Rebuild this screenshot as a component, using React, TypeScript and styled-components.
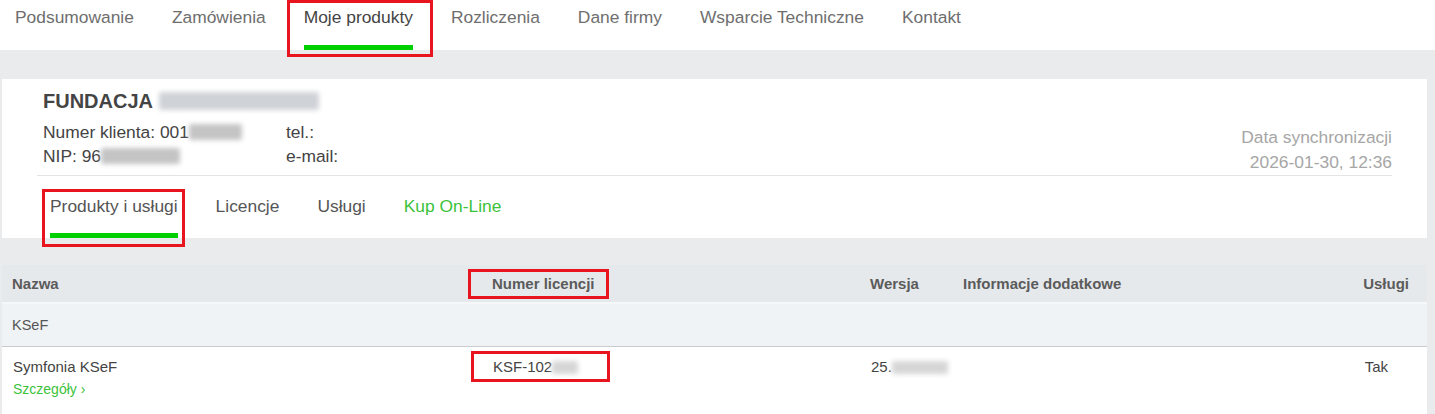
import React from "react";
import styled, { createGlobalStyle } from "styled-components";

const GlobalStyle = createGlobalStyle`
  html, body { margin: 0; padding: 0; background: #ffffff; }
  body { font-family: "Liberation Sans", Arial, sans-serif; color: #444; }
  * { box-sizing: border-box; }
`;

const Page = styled.div`
  width: 1435px;
  height: 414px;
  overflow: hidden;
  background: #ffffff;
`;

const Nav = styled.nav`
  display: flex;
  gap: 38px;
  height: 50px;
  padding: 0 15px;
  background: #ffffff;
  position: relative;
  z-index: 2;
`;

const NavItem = styled.div<{ $active?: boolean }>`
  position: relative;
  display: flex;
  flex-direction: column;
  padding-top: 5px;
  font-size: 17.4px;
  line-height: 24px;
  color: ${(p) => (p.$active ? "#444" : "#6e6e6e")};
  white-space: nowrap;
`;

const Bar = styled.div<{ $gap: number }>`
  margin-top: ${(p) => p.$gap}px;
  height: 5px;
  background: #00d000;
`;

const Highlight = styled.div<{ $l: number; $t: number; $w: number; $h: number }>`
  position: absolute;
  left: ${(p) => p.$l}px;
  top: ${(p) => p.$t}px;
  width: ${(p) => p.$w}px;
  height: ${(p) => p.$h}px;
  border: 3px solid #e8151f;
  pointer-events: none;
  z-index: 5;
`;

const Main = styled.main`
  background: #eaebed;
  padding: 29px 8px 0 2px;
  height: 364px;
`;

const Card = styled.section`
  background: #ffffff;
  padding: 9px 35px 0;
  height: 159px;
`;

const CardHeader = styled.div`
  display: flex;
  justify-content: space-between;
  align-items: flex-end;
  border-bottom: 1px solid #e4e4e4;
`;

const ClientBlock = styled.div`
  padding: 0 0 7px 6px;
`;

const Company = styled.div`
  font-size: 20px;
  font-weight: bold;
  line-height: 26px;
  color: #444;
  margin-bottom: 6px;
  display: flex;
  align-items: center;
`;

const InfoGrid = styled.div`
  display: grid;
  grid-template-columns: 243px auto;
  font-size: 17.4px;
  line-height: 24px;
  color: #444;
`;

const InfoCell = styled.div`
  display: flex;
  align-items: center;
  white-space: nowrap;
`;

const Blurred = styled.span<{ $w: number; $h: number; $tone?: string }>`
  display: inline-block;
  width: ${(p) => p.$w}px;
  height: ${(p) => p.$h}px;
  background: ${(p) => p.$tone || "#c4c4c4"};
  filter: blur(2.5px);
  border-radius: 2px;
`;

const SyncBlock = styled.div`
  text-align: right;
  font-size: 17.4px;
  line-height: 25px;
  color: #a6a6a6;
`;

const SubTabs = styled.div`
  display: flex;
  gap: 38px;
  padding-left: 13px;
`;

const SubTab = styled.div<{ $green?: boolean }>`
  position: relative;
  display: flex;
  flex-direction: column;
  padding-top: 18px;
  font-size: 17.4px;
  line-height: 24px;
  color: ${(p) => (p.$green ? "#3cc23c" : "#555")};
  white-space: nowrap;
`;

const Table = styled.section`
  margin-top: 27px;
  background: #ffffff;
  height: 149px;
`;

const Row = styled.div`
  display: grid;
  grid-template-columns: 480px 378px 93px 1fr auto;
`;

const HeadRow = styled(Row)`
  height: 37px;
  background: #e6e9ec;
  border-bottom: 2px solid #f6f7f8;
  box-sizing: content-box;
`;

const HeadCell = styled.div<{ $right?: boolean }>`
  position: relative;
  display: flex;
  align-items: center;
  justify-content: ${(p) => (p.$right ? "flex-end" : "flex-start")};
  padding: 0 ${(p) => (p.$right ? "18px" : "0")} 0 10px;
  font-size: 15px;
  font-weight: bold;
  color: #5b5b5b;
  white-space: nowrap;
`;

const GroupRow = styled.div`
  height: 42px;
  display: flex;
  align-items: center;
  padding-left: 10px;
  background: #f0f3f5;
  border-bottom: 1px solid #c9cccf;
  box-sizing: content-box;
  font-size: 14.5px;
  color: #555;
`;

const DataCell = styled.div<{ $right?: boolean }>`
  position: relative;
  display: flex;
  flex-direction: column;
  align-items: ${(p) => (p.$right ? "flex-end" : "flex-start")};
  padding: 10px ${(p) => (p.$right ? "39px" : "0")} 0 ${(p) => (p.$right ? "0" : "11px")};
  font-size: 15px;
  line-height: 20px;
  color: #444;
  white-space: nowrap;
`;

const Inline = styled.span`
  display: inline-flex;
  align-items: center;
`;

const DetailsLink = styled.a`
  margin-top: 2px;
  font-size: 14px;
  line-height: 20px;
  color: #3cc23c;
  text-decoration: none;
`;

const navItems = [
  "Podsumowanie",
  "Zamówienia",
  "Moje produkty",
  "Rozliczenia",
  "Dane firmy",
  "Wsparcie Techniczne",
  "Kontakt",
];

export default function App() {
  return (
    <Page>
      <GlobalStyle />
      <Nav>
        {navItems.map((item) => {
          const active = item === "Moje produkty";
          return (
            <NavItem key={item} $active={active}>
              {item}
              {active && <Bar $gap={16} />}
              {active && <Highlight $l={-17} $t={0} $w={146} $h={57} />}
            </NavItem>
          );
        })}
      </Nav>
      <Main>
        <Card>
          <CardHeader>
            <ClientBlock>
              <Company>
                FUNDACJA&nbsp;
                <Blurred $w={160} $h={18} $tone="#cfd2d6" />
              </Company>
              <InfoGrid>
                <InfoCell>
                  Numer klienta: 001
                  <Blurred $w={53} $h={16} />
                </InfoCell>
                <InfoCell>tel.:</InfoCell>
                <InfoCell>
                  NIP: 96
                  <Blurred $w={79} $h={16} />
                </InfoCell>
                <InfoCell>e-mail:</InfoCell>
              </InfoGrid>
            </ClientBlock>
            <SyncBlock>
              <div>Data synchronizacji</div>
              <div>2026-01-30, 12:36</div>
            </SyncBlock>
          </CardHeader>
          <SubTabs>
            <SubTab>
              Produkty i usługi
              <Bar $gap={15} />
              <Highlight $l={-8} $t={13} $w={143} $h={58} />
            </SubTab>
            <SubTab>Licencje</SubTab>
            <SubTab>Usługi</SubTab>
            <SubTab $green>Kup On-Line</SubTab>
          </SubTabs>
        </Card>
        <Table>
          <HeadRow>
            <HeadCell>Nazwa</HeadCell>
            <HeadCell>
              Numer licencji
              <Highlight $l={-14} $t={4} $w={141} $h={30} />
            </HeadCell>
            <HeadCell>Wersja</HeadCell>
            <HeadCell>Informacje dodatkowe</HeadCell>
            <HeadCell $right>Usługi</HeadCell>
          </HeadRow>
          <GroupRow>KSeF</GroupRow>
          <Row>
            <DataCell>
              Symfonia KSeF
              <DetailsLink href="#">Szczegóły ›</DetailsLink>
            </DataCell>
            <DataCell>
              <Inline>
                KSF-102
                <Blurred $w={26} $h={13} $tone="#d6d6d6" />
              </Inline>
              <Highlight $l={-11} $t={4} $w={139} $h={31} />
            </DataCell>
            <DataCell>
              <Inline>
                25.
                <Blurred $w={56} $h={13} $tone="#d6d6d6" />
              </Inline>
            </DataCell>
            <DataCell />
            <DataCell $right>Tak</DataCell>
          </Row>
        </Table>
      </Main>
    </Page>
  );
}
